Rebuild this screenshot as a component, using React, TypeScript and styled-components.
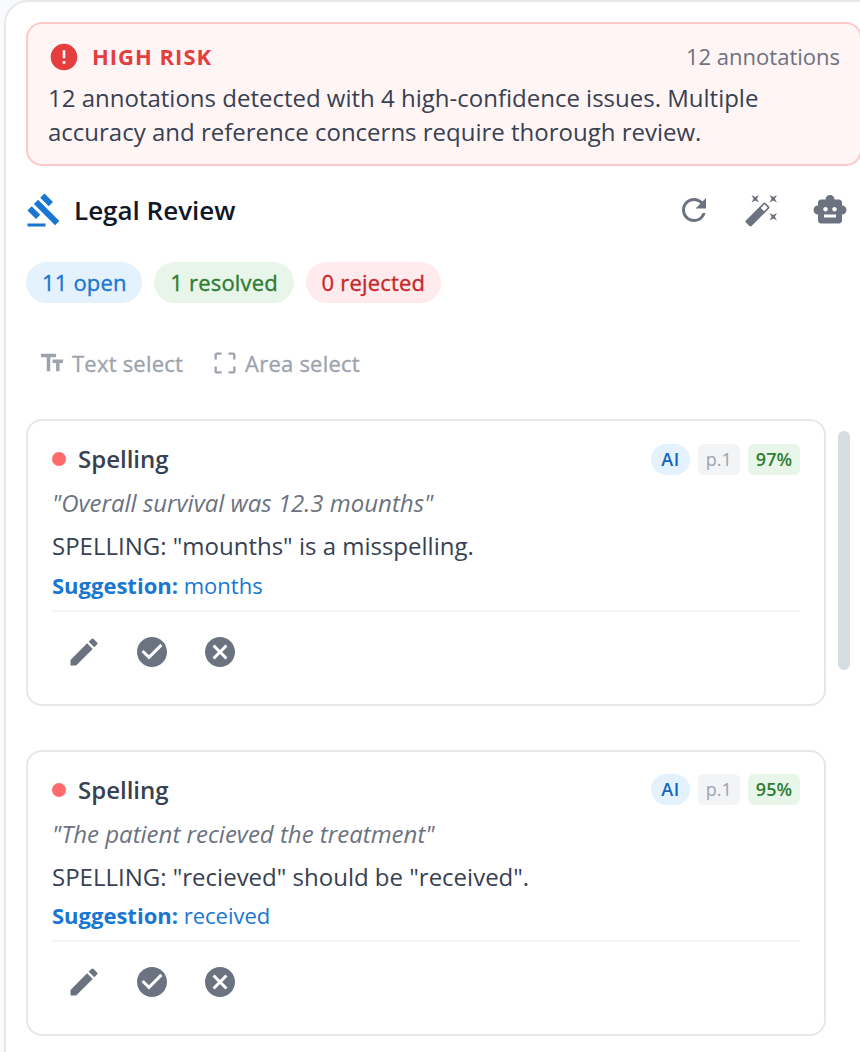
import React from 'react';
import styled, { createGlobalStyle, css } from 'styled-components';
import {
  MdAutoFixHigh,
  MdCancel,
  MdCheckCircle,
  MdCropFree,
  MdEdit,
  MdError,
  MdGavel,
  MdRefresh,
  MdSmartToy,
  MdTextFields,
} from 'react-icons/md';

const GlobalStyle = createGlobalStyle`
  *, *::before, *::after { box-sizing: border-box; }
  body {
    margin: 0;
    background: #f9fafc;
    font-family: 'Open Sans', 'Noto Sans', sans-serif;
    color: #374151;
  }
  svg { display: block; flex: none; }
`;

/* Medium weight: Open Sans has no 500 face installed, so regular is thickened. */
const mediumText = css`
  letter-spacing: 0.19px;
  -webkit-text-stroke: 0.35px currentColor;
`;

const Page = styled.div`
  height: 100vh;
  padding-left: 4px;
  overflow: hidden;
`;

const Panel = styled.main`
  width: 880px;
  height: 1200px;
  padding: 20px;
  background: #fff;
  border: 2px solid #e5e7eb;
  border-radius: 24px;
`;

const RiskBanner = styled.section`
  width: 836px;
  padding: 16px 20px;
  background: #fff5f5;
  border: 2px solid #ffc9c9;
  border-radius: 16px;
`;

const RiskHeader = styled.div`
  display: flex;
  align-items: flex-start;
  gap: 12px;
  height: 33px;
  margin-bottom: 8px;
  font-size: 22px;
  line-height: 32px;
  color: #e53e3e;

  svg { margin-top: 0.7px; }
`;

const RiskLevel = styled.strong`
  flex: 1;
  font-weight: 700;
  letter-spacing: 1px;
`;

const RiskCount = styled.span`
  color: #6b7280;
`;

const RiskText = styled.p`
  margin: 0;
  font-size: 24px;
  line-height: 33.6px;
`;

const TitleBar = styled.header`
  display: flex;
  align-items: center;
  gap: 12px;
  width: 836px;
  height: 64px;
  margin-top: 12px;
  color: #1976d2;
`;

const Title = styled.h1`
  flex: 1;
  margin: 0;
  font-size: 26px;
  font-weight: 600;
  color: #111827;
`;

const ButtonGroup = styled.div`
  display: flex;
  gap: 4px;
`;

const IconButton = styled.button`
  display: flex;
  align-items: center;
  justify-content: center;
  width: 64px;
  height: 64px;
  padding: 0;
  border: 0;
  border-radius: 50%;
  background: transparent;
  color: #6b7280;
`;

const Chips = styled.div`
  display: flex;
  gap: 12px;
  margin-top: 20px;
`;

type Tone = 'blue' | 'green' | 'red';
const tones: Record<Tone, { bg: string; fg: string }> = {
  blue: { bg: '#e3f2fd', fg: '#1976d2' },
  green: { bg: '#e8f5e9', fg: '#2e7d32' },
  red: { bg: '#ffebee', fg: '#c62828' },
};

const Chip = styled.span<{ $tone: Tone }>`
  height: 41px;
  padding: 0 15.6px 0 16px;
  border-radius: 24px;
  font-size: 22px;
  line-height: 41px;
  ${mediumText}
  background: ${(p) => tones[p.$tone].bg};
  color: ${(p) => tones[p.$tone].fg};
`;

const Tools = styled.div`
  display: flex;
  gap: 28px;
  height: 33px;
  margin: 43.8px 0 39.3px;
  padding-left: 12px;
`;

const Tool = styled.button`
  display: flex;
  align-items: center;
  gap: 6px;
  padding: 0;
  border: 0;
  background: transparent;
  font: 400 22px/33px 'Open Sans', 'Noto Sans', sans-serif;
  ${mediumText}
  letter-spacing: 0.22px;
  color: #9ca3af;
`;

const ListArea = styled.div`
  display: flex;
  align-items: flex-start;
  gap: 12px;
`;

const List = styled.div`
  display: flex;
  flex-direction: column;
  gap: 44px;
  width: 800px;
`;

const ScrollThumb = styled.div`
  width: 12px;
  height: 239px;
  margin-top: 11.7px;
  border-radius: 6px;
  background: #d5dde0;
`;

const Card = styled.article`
  height: 286.4px;
  padding: 20px 24px;
  border: 2px solid #e5e7eb;
  border-radius: 16px;
  background: #fff;
`;

const CardHeader = styled.div`
  display: flex;
  align-items: center;
  gap: 8px;
  height: 36px;
`;

const Dot = styled.span`
  width: 14px;
  height: 14px;
  margin-right: 4px;
  border-radius: 50%;
  background: #ff6b6b;
`;

const Category = styled.h2`
  flex: 1;
  margin: 0 0 0.8px;
  font-size: 24px;
  font-weight: 600;
`;

const Badge = styled.span<{ $kind: 'ai' | 'page' | 'score' }>`
  height: 31px;
  padding: 0 ${(p) => (p.$kind === 'ai' ? 10 : 8)}px;
  border-radius: ${(p) => (p.$kind === 'ai' ? 16 : 6)}px;
  font-size: 18px;
  font-weight: ${(p) => (p.$kind === 'page' ? 400 : 600)};
  letter-spacing: ${(p) => (p.$kind === 'ai' ? 0.6 : 0)}px;
  line-height: 31px;
  background: ${(p) => ({ ai: '#e3f2fd', page: '#f3f4f6', score: '#e8f5e9' })[p.$kind]};
  color: ${(p) => ({ ai: '#1565c0', page: '#9ca3af', score: '#2e7d32' })[p.$kind]};
`;

const Quote = styled.p`
  margin: 8.9px 0 0;
  font-size: 24px;
  font-style: italic;
  line-height: 33.6px;
  color: #6b7280;
`;

const Message = styled.p`
  margin: 9.4px 0 0;
  font-size: 24px;
  line-height: 33.6px;
`;

const Suggestion = styled.p`
  margin: 6.9px 0 9.2px;
  font-size: 22px;
  line-height: 30.8px;
  color: #1976d2;
`;

const Actions = styled.div`
  display: flex;
  gap: 4px;
  padding-top: 8px;
  border-top: 2px solid #f3f4f6;
`;

interface Annotation {
  quote: string;
  message: string;
  suggestion: string;
  score: number;
}

const annotations: Annotation[] = [
  {
    quote: '"Overall survival was 12.3 mounths"',
    message: 'SPELLING: "mounths" is a misspelling.',
    suggestion: 'months',
    score: 97,
  },
  {
    quote: '"The patient recieved the treatment"',
    message: 'SPELLING: "recieved" should be "received".',
    suggestion: 'received',
    score: 95,
  },
];

function AnnotationCard({ quote, message, suggestion, score }: Annotation) {
  return (
    <Card>
      <CardHeader>
        <Dot />
        <Category>Spelling</Category>
        <Badge $kind="ai">AI</Badge>
        <Badge $kind="page">p.1</Badge>
        <Badge $kind="score">{score}%</Badge>
      </CardHeader>
      <Quote>{quote}</Quote>
      <Message>{message}</Message>
      <Suggestion>
        <strong>Suggestion:</strong> {suggestion}
      </Suggestion>
      <Actions>
        <IconButton aria-label="Edit"><MdEdit size={36} /></IconButton>
        <IconButton aria-label="Resolve"><MdCheckCircle size={36} /></IconButton>
        <IconButton aria-label="Reject"><MdCancel size={36} /></IconButton>
      </Actions>
    </Card>
  );
}

export default function App() {
  return (
    <Page>
      <GlobalStyle />
      <Panel>
        <RiskBanner>
          <RiskHeader>
            <MdError size={32} />
            <RiskLevel>HIGH RISK</RiskLevel>
            <RiskCount>12 annotations</RiskCount>
          </RiskHeader>
          <RiskText>
            12 annotations detected with 4 high-confidence issues. Multiple
            accuracy and reference concerns require thorough review.
          </RiskText>
        </RiskBanner>
        <TitleBar>
          <MdGavel size={36} />
          <Title>Legal Review</Title>
          <ButtonGroup>
            <IconButton aria-label="Refresh"><MdRefresh size={36} /></IconButton>
            <IconButton aria-label="Auto fix"><MdAutoFixHigh size={36} /></IconButton>
            <IconButton aria-label="Assistant"><MdSmartToy size={36} /></IconButton>
          </ButtonGroup>
        </TitleBar>
        <Chips>
          <Chip $tone="blue">11 open</Chip>
          <Chip $tone="green">1 resolved</Chip>
          <Chip $tone="red">0 rejected</Chip>
        </Chips>
        <Tools>
          <Tool><MdTextFields size={28} />Text select</Tool>
          <Tool><MdCropFree size={28} />Area select</Tool>
        </Tools>
        <ListArea>
          <List>
            {annotations.map((a) => (
              <AnnotationCard key={a.score} {...a} />
            ))}
          </List>
          <ScrollThumb />
        </ListArea>
      </Panel>
    </Page>
  );
}
